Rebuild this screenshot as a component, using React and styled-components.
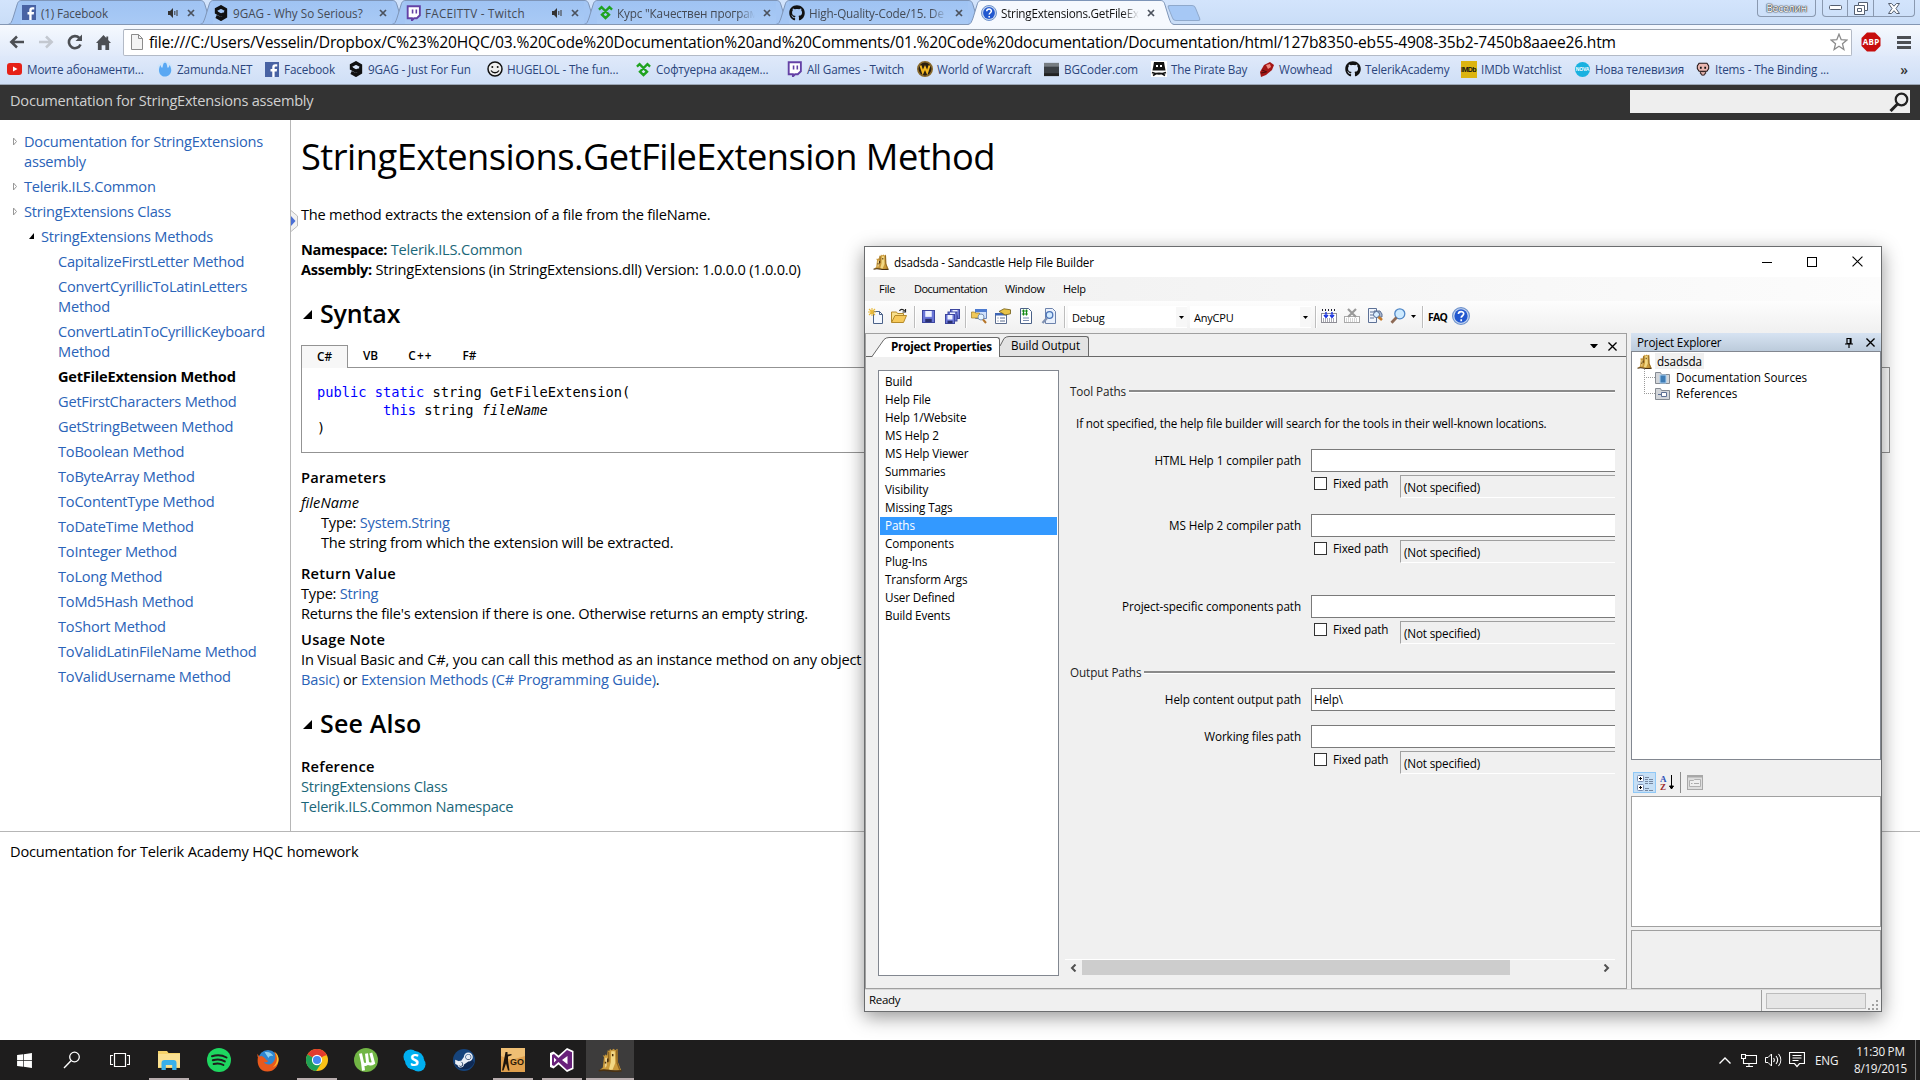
import React from 'react';
import styled, { createGlobalStyle, css } from 'styled-components';
import { FaWindows, FaGithub, FaSteamSymbol } from 'react-icons/fa';

const Global = createGlobalStyle`
  * { box-sizing: border-box; }
  html, body { margin: 0; padding: 0; background: #fff; overflow: hidden; }
  body { font-family: "Open Sans", "Noto Sans", sans-serif; color: #000; }
  svg { display: block; flex: none; }
`;

const Screen = styled.div`
  width: 1920px;
  height: 1080px;
  display: flex;
  flex-direction: column;
  position: relative;
  overflow: hidden;
  background: #fff;
  white-space: nowrap;
`;

/* ---------- drawings ---------- */

const Svg = ({ w = 16, h = w, vb = '0 0 16 16', children, ...rest }) => (
  <svg width={w} height={h} viewBox={vb} fill="none" preserveAspectRatio="none" {...rest}>{children}</svg>
);

const FacebookIcon = () => (
  <Svg w={14} h={15}><rect width="16" height="16" fill="#4862a3" /><path d="M11 16V10h2.400l.4-2.600H11V6c0-.9.4-1.300 1.400-1.300H14V2.300h-2.200C9.300 2.300 8.300 3.600 8.300 5.700V7.400H6.300V10h2v6z" fill="#fff" /></Svg>
);
const NineIcon = () => (
  <Svg w={14} h={16}><path d="M13.200 8.300 8 10.200 2.700 7.500V4.300L8 1.900l5.300 2.600v7L8 14.200l-5.600-2.700" stroke="#111" strokeWidth="3.500" /></Svg>
);
const TwitchIcon = () => (
  <Svg w={15} h={16}><path d="M1.800 1.200h13v9l-3.300 3H8.600L6.300 15.400V13.200H1.800z" fill="#fff" stroke="#6441a5" strokeWidth="2" /><path d="M7 4.500v4M11 4.500v4" stroke="#6441a5" strokeWidth="1.700" /></Svg>
);
const TelerikIcon = () => (
  <Svg w={15}><path d="M1 5 3.800 2.300 8 6.500l4.200-4.200L15 5M8 6.500l-3.800 3.800L8 14l3.800-3.700z" stroke="#1fa31f" strokeWidth="2.500" /></Svg>
);
const HelpIcon = ({ s = 16 }) => (
  <Svg w={s}><circle cx="8" cy="8" r="7.500" fill="#c6d6ef" stroke="#6f93cc" /><circle cx="8" cy="8" r="5.900" fill="#2258cf" /><path d="M5.700 6.300c.1-3 4.700-2.900 4.700-.2C10.400 7.800 8.200 7.700 8.200 9.600M8.200 10.900v1.700" stroke="#fff" strokeWidth="1.500" /></Svg>
);
const YoutubeIcon = () => (
  <Svg w={15} h={12} vb="0 0 15 12"><rect width="15" height="12" rx="3" fill="#e62117" /><path d="M6 3.500 10.500 6 6 8.500z" fill="#fff" /></Svg>
);
const ZamundaIcon = () => (
  <Svg><circle cx="8" cy="8.500" r="7.400" fill="#cfe5fb" /><path d="M8 .5c3 3.500 1.500 5 3 6.500 1-1 1.500-2 1.500-3 4 6 .5 11.500-4.500 11.500S0 10 3.500 4c0 1 .5 2 1.500 3C6.500 5.500 5 4 8 .5z" fill="#5aa8f3" /><path d="M1 6a7.500 7.500 0 0 1 14 0" stroke="#cfe5fb" strokeWidth="1" /></Svg>
);
const SmileIcon = () => (
  <Svg><circle cx="8" cy="8" r="7" fill="#eee" stroke="#111" strokeWidth="1.500" /><circle cx="5.300" cy="6" r="1" fill="#111" /><circle cx="10.700" cy="6" r="1" fill="#111" /><path d="M4 9.500c2 3 6 3 8 0" stroke="#111" strokeWidth="1.300" /></Svg>
);
const WowIcon = () => (
  <Svg><circle cx="8" cy="8" r="7.200" fill="#2b2010" stroke="#8a6a2c" strokeWidth="1.600" /><path d="M3.500 4.500 5.800 11.500 8 6.500l2.200 5L12.500 4.500" stroke="#f5b921" strokeWidth="2" /></Svg>
);
const BgCoderIcon = () => (
  <Svg w={15}><rect y="1" width="16" height="14" fill="#3b3f44" /><path d="M0 1h16v4H0z" fill="#777d82" /><path d="M0 12h16v3H0z" fill="#222" /></Svg>
);
const PirateIcon = () => (
  <Svg><rect width="16" height="16" fill="#fff" /><path d="M3 1h10l1.500 8.500h-13z" fill="#111" /><path d="M5 4h2v2H5zM9 4h2v2H9z" fill="#fff" /><path d="M1 11.500c5 2 9 2 14 0M2 14.500c4-3 8-3 12 0" stroke="#111" strokeWidth="1.600" /></Svg>
);
const WowheadIcon = () => (
  <Svg><path d="M1 11 5 4l6-3 4 3-2 5-6 5-5 2z" fill="#a31515" /><path d="M7 4l4-1 1 3-3 2z" fill="#f08a80" /><path d="M2 12l5-1M3 9l5 2" stroke="#4b0b0b" /></Svg>
);
const IsaacIcon = () => (
  <Svg w={14}><path d="M3.500 1.500h9l2 3v3l-2 3h-9l-2-3v-3z" fill="#e9b6b0" stroke="#241515" strokeWidth="1.200" /><path d="M4.500 5.500h2v2.300h-2zM9.500 5.500h2v2.300h-2z" fill="#111" /><path d="M5 11h6v2.500H9.500V15h-3v-1.500H5z" fill="#e9b6b0" stroke="#241515" /></Svg>
);
const CastleIcon = ({ s = 16 }) => (
  <Svg w={s}>
    <path d="M6.500 1.500 7.500 2l.5-1.500 1 1 1.500-1 1 1L13 .5l.3 9L15.500 15H.8l2.400-2L4 6.200l-.8-1.400 1.300.3.7-1 .8 1z" fill="#c9993a" />
    <path d="M8.800 2.200h2.400l.3 7.800-1.800 4.500H7.200l1.300-5z" fill="#f2d884" />
    <path d="M4.800 6.500h1.400L5.800 12l-1.300 1.500z" fill="#ecd08a" />
    <path d="M12.500 1.500l.3 8.500 1.700 4.500M7 2.500 7.200 9" stroke="#8a6220" strokeWidth=".9" />
    <path d="M.5 15.200c3-1 4.500-.6 7.500 0s5 .2 7.700 0" stroke="#4a3213" strokeWidth="1.100" />
    <path d="M6.500 7v2.500M9.800 4v1.500M5 9.200v1.200" stroke="#4a2f0c" />
  </Svg>
);

/* ---------- browser chrome ---------- */

const TabStrip = styled.div`
  height: 25px;
  flex: none;
  display: flex;
  padding-left: 8px;
  background: linear-gradient(#d3e4fc, #c9ddf7);
  box-shadow: inset 0 -1px 0 #8497b3;
`;
const TabBox = styled.div`
  display: flex;
  width: 206px;
  margin-right: -14px;
  height: 25px;
  flex: none;
  position: relative;
  z-index: ${(p) => (p.$active ? 2 : 1)};
`;
const TabMiddle = styled.div`
  flex: 1;
  height: 25px;
  display: flex;
  align-items: center;
  margin: 0 -1px;
  padding-bottom: 1px;
  border-top: 1px solid #7e95b8;
  background: ${(p) => (p.$active ? '#f6f9fe' : 'linear-gradient(#9fc3f3, #a9caf5)')};
  ${(p) => !p.$active && css`box-shadow: inset 0 -1px 0 #8497b3;`}
`;
const TabTitle = styled.span`
  width: ${(p) => p.$w}px;
  margin-left: 4px;
  font-size: 11.700px;
  letter-spacing: ${(p) => p.$ls ?? -0.140}px;
  color: ${(p) => (p.$active ? '#111' : '#444a55')};
  ${(p) => p.$fade && css`
    -webkit-mask-image: linear-gradient(90deg, #000 88%, transparent 100%);
  `}
`;
const TabIcon = styled.span`
  width: 16px;
  display: flex;
  justify-content: center;
`;
const TabEnd = styled.span`
  flex: 1;
  display: flex;
  align-items: center;
  justify-content: flex-end;
  gap: 9px;
  margin-right: 6px;
`;
const NewTab = styled.span`
  width: 28px;
  height: 16px;
  margin: 5px 0 0 10px;
  border: 1px solid #8fa9cc;
  border-radius: 3px;
  background: #a6c8f5;
  transform: skewX(22deg);
`;
const SlantSvg = styled.svg`
  transform: ${(p) => (p.$flip ? 'scaleX(-1)' : 'none')};
`;
const Slant = ({ active, right }) => (
  <SlantSvg $flip={right} width="14" height="25" viewBox="0 0 14 25">
    <path d="M0 24.500C3 24 3.500 22 5 18L9 5C10 1.500 11 .5 14 .5V25H0z" fill={active ? '#f6f9fe' : '#a4c6f4'} />
    <path d="M0 24.500C3 24 3.500 22 5 18L9 5C10 1.500 11 .5 14 .5" fill="none" stroke="#7e95b8" />
    {!active && <path d="M0 24.500H14" stroke="#8497b3" />}
  </SlantSvg>
);
const Speaker = () => (
  <Svg w={10} h={10} vb="0 0 10 10"><path d="M0 3h2l3-3v10L2 7H0z" fill="#333" /><path d="M6.800 3v4M9 2v6" stroke="#444" strokeWidth="1.100" /></Svg>
);
const TabClose = () => (
  <Svg w={8} h={8} vb="0 0 8 8"><path d="M1 1l6 6M7 1 1 7" stroke="#4b525d" strokeWidth="1.700" /></Svg>
);

function Tab({ icon, title, w, ls, sound, fade, active }) {
  return (
    <TabBox $active={active}>
      <Slant active={active} />
      <TabMiddle $active={active}>
        <TabIcon>{icon}</TabIcon>
        <TabTitle $w={w} $ls={ls} $fade={fade} $active={active}>{title}</TabTitle>
        <TabEnd>{sound && <Speaker />}<TabClose /></TabEnd>
      </TabMiddle>
      <Slant active={active} right />
    </TabBox>
  );
}

const CaptionGroup = styled.div`
  display: flex;
  margin-left: auto;
  margin-right: 5px;
  gap: 14px;
`;
const UserButton = styled.div`
  width: 59px;
  height: 17px;
  border: 1px solid #8a99b0;
  border-top: 0;
  border-radius: 0 0 4px 4px;
  text-align: center;
  font-size: 10.300px;
  line-height: 17px;
  letter-spacing: -0.200px;
  color: #fff;
  text-shadow: 0 0 1px #222, 0 0 1px #222, 0 0 2px #444;
`;
const CaptionButtons = styled.div`
  display: flex;
  width: 93px;
  height: 17px;
  margin-left: -8px;
  border: 1px solid #8a99b0;
  border-top: 0;
  border-radius: 0 0 4px 4px;
`;
const CaptionButton = styled.div`
  width: ${(p) => p.$w}px;
  display: flex;
  align-items: center;
  justify-content: center;
  & + & { border-left: 1px solid #8a99b0; }
`;

const Toolbar = styled.div`
  height: 31px;
  flex: none;
  display: flex;
  align-items: center;
  padding: 3px 9px 0 9px;
  background: linear-gradient(#f6f9fe, #e0eafa);
`;
const NavIcons = styled.div`
  display: flex;
  align-items: center;
  width: 114px;
  gap: 13px;
`;
const Omnibox = styled.div`
  width: 1730px;
  height: 27px;
  display: flex;
  align-items: center;
  padding: 0 3px 0 7px;
  border: 1px solid #b3bac6;
  border-top-color: #9aa2ae;
  border-radius: 2px;
  background: #fff;
`;
const Url = styled.span`
  flex: 1;
  margin-left: 6px;
  font-size: 15.600px;
  letter-spacing: -0.186px;
`;
const ToolbarEnd = styled.div`
  display: flex;
  align-items: center;
  margin-left: 9px;
  gap: 16px;
`;
const AbpText = styled.text`
  font: 700 8px "Open Sans", sans-serif;
  fill: #fff;
`;

const BookmarkBar = styled.div`
  height: 29px;
  flex: none;
  display: flex;
  align-items: center;
  padding: 0 0 2px 6px;
  background: linear-gradient(#dfe9fa, #cfdff6);
  border-bottom: 1px solid #9ba6b5;
`;
const Bookmark = styled.div`
  width: ${(p) => p.$w}px;
  display: flex;
  align-items: center;
  gap: 4px;
  flex: none;
  font-size: 11.700px;
  letter-spacing: -0.130px;
  color: #2b457c;
`;
const BookmarkIcon = styled.span`
  width: 17px;
  display: flex;
  justify-content: center;
`;
const ImdbBadge = styled.span`
  width: 16px;
  height: 17px;
  background: #dcb410;
  font: 700 7px/17px "Liberation Sans", sans-serif;
  letter-spacing: -0.500px;
  color: #111;
  text-align: center;
`;
const NovaBadge = styled.span`
  width: 15px;
  height: 15px;
  border-radius: 50%;
  background: #19b1e0;
  font: 700 5px/15px "Liberation Sans", sans-serif;
  color: #fff;
  text-align: center;
`;
const More = styled.span`
  margin-left: auto;
  margin-right: 12px;
  font-size: 14px;
  font-weight: 600;
  color: #333;
`;

const BOOKMARKS = [
  [150, <YoutubeIcon />, 'Моите абонаменти...'],
  [107, <ZamundaIcon />, 'Zamunda.NET'],
  [84, <FacebookIcon />, 'Facebook'],
  [139, <NineIcon />, '9GAG - Just For Fun'],
  [149, <SmileIcon />, 'HUGELOL - The fun...'],
  [151, <TelerikIcon />, 'Софтуерна академ...'],
  [130, <TwitchIcon />, 'All Games - Twitch'],
  [127, <WowIcon />, 'World of Warcraft'],
  [107, <BgCoderIcon />, 'BGCoder.com'],
  [108, <PirateIcon />, 'The Pirate Bay'],
  [86, <WowheadIcon />, 'Wowhead'],
  [116, <FaGithub size={16} color="#111" />, 'TelerikAcademy'],
  [114, <ImdbBadge>IMDb</ImdbBadge>, 'IMDb Watchlist'],
  [120, <NovaBadge>NOVA</NovaBadge>, 'Нова телевизия'],
  [150, <IsaacIcon />, 'Items - The Binding ...'],
];

function Browser() {
  return (
    <>
      <TabStrip>
        <Tab icon={<FacebookIcon />} title="(1) Facebook" w={90} sound />
        <Tab icon={<NineIcon />} title="9GAG - Why So Serious?" w={136} ls={0} />
        <Tab icon={<TwitchIcon />} title="FACEITTV - Twitch" w={108} ls={0.250} sound />
        <Tab icon={<TelerikIcon />} title={'Курс "Качествен програм'} w={138} fade />
        <Tab icon={<FaGithub size={16} color="#111" />} title="High-Quality-Code/15. De" w={138} fade />
        <Tab icon={<HelpIcon />} title="StringExtensions.GetFileEx" w={138} ls={-0.240} fade active />
        <NewTab />
        <CaptionGroup>
          <UserButton>Веселин</UserButton>
          <CaptionButtons>
            <CaptionButton $w={25}><Svg w={13} h={6} vb="0 0 13 6"><rect x=".5" y=".5" width="12" height="4" rx="1" fill="#fff" stroke="#555f70" /></Svg></CaptionButton>
            <CaptionButton $w={26}><Svg w={14} h={13} vb="0 0 14 13"><path d="M4.500.500h9v8h-3v4h-10v-9h4z" fill="#fff" stroke="#555f70" /><path d="M4.500 3.500h6v5M3.500 6.500h4v3h-4z" stroke="#555f70" /></Svg></CaptionButton>
            <CaptionButton $w={42}><Svg w={12} h={11} vb="0 0 12 11"><path d="M.500.500h3L6 3.200 8.500.500h3L8 5.500l3.500 5h-3L6 7.700 3.500 10.500h-3l3.500-5z" fill="#fff" stroke="#555f70" /></Svg></CaptionButton>
          </CaptionButtons>
        </CaptionGroup>
      </TabStrip>
      <Toolbar>
        <NavIcons>
          <Svg><path d="M15 8H2.500M8 2.500 2.300 8 8 13.500" stroke="#4c4f54" strokeWidth="2.500" /></Svg>
          <Svg><path d="M1 8h12.500M8 2.500 13.700 8 8 13.500" stroke="#c3c8d0" strokeWidth="2.500" /></Svg>
          <Svg><path d="M13.500 10.500A6 6 0 1 1 12.300 4" stroke="#4c4f54" strokeWidth="2.600" /><path d="M15 .5V7H8.500z" fill="#4c4f54" /></Svg>
          <Svg w={15}><path d="M8 0 0 8.500h2V16h4v-5h4v5h4V8.500h2L13 5.300V1.500h-2v1.700z" fill="#4c4f54" /></Svg>
        </NavIcons>
        <Omnibox>
          <Svg w={12} h={16} vb="0 0 12 16"><path d="M.500.500h7l4 4v11H.500z" fill="#f4f4f4" stroke="#8c8c8c" /><path d="M7.500.500v4h4" stroke="#8c8c8c" /></Svg>
          <Url>file:///C:/Users/Vesselin/Dropbox/C%23%20HQC/03.%20Code%20Documentation%20and%20Comments/01.%20Code%20documentation/Documentation/html/127b8350-eb55-4908-35b2-7450b8aaee26.htm</Url>
          <Svg w={18} h={18} vb="0 0 18 18"><path d="M9 1.200l2.200 5.500 5.700.400-4.400 3.700 1.400 5.700L9 13.300l-4.900 3.200 1.400-5.700L1.100 7.100l5.700-.400z" fill="#fff" stroke="#8b8b8b" strokeWidth="1.300" /></Svg>
        </Omnibox>
        <ToolbarEnd>
          <Svg w={20} h={20} vb="0 0 20 20"><path d="M6 .5h8L19.500 6v8L14 19.500H6L.5 14V6z" fill="#c70d0d" /><AbpText x="1.800" y="13" textLength="16.500">ABP</AbpText></Svg>
          <Svg w={14} h={13} vb="0 0 14 13"><path d="M0 1.500h14M0 6.500h14M0 11.500h14" stroke="#4c4f54" strokeWidth="3" /></Svg>
        </ToolbarEnd>
      </Toolbar>
      <BookmarkBar>
        {BOOKMARKS.map(([w, icon, label]) => (
          <Bookmark key={label} $w={w}><BookmarkIcon>{icon}</BookmarkIcon>{label}</Bookmark>
        ))}
        <More>»</More>
      </BookmarkBar>
    </>
  );
}

/* ---------- documentation page ---------- */

const DocHeader = styled.header`
  height: 35px;
  flex: none;
  display: flex;
  align-items: flex-start;
  justify-content: space-between;
  padding: 5px 10px 0;
  background: #333;
  color: #d0d0d0;
  font-size: 14.600px;
  line-height: 21px;
  letter-spacing: -0.240px;
`;
const SearchBox = styled.div`
  width: 280px;
  height: 23px;
  display: flex;
  align-items: center;
  justify-content: flex-end;
  padding-right: 1px;
  background: #eee;
`;
const DocBody = styled.div`
  height: 712px;
  flex: none;
  display: flex;
  border-bottom: 1px solid #b6b6b6;
  font-size: 14.600px;
  line-height: 20px;
  letter-spacing: -0.215px;
`;
const Toc = styled.nav`
  width: 291px;
  padding-top: 11px;
  border-right: 1px solid #b6b6b6;
  display: flex;
  flex-direction: column;
  gap: 5px;
`;
const TocItem = styled.div`
  display: flex;
  padding-left: ${(p) => 10 + p.$level * 17}px;
  color: ${(p) => (p.$current ? '#000' : '#2a63b8')};
  font-weight: ${(p) => (p.$current ? 700 : 400)};
  letter-spacing: ${(p) => (p.$current ? -0.230 : -0.215)}px;
`;
const TocMark = styled.span`
  width: 14px;
  padding-top: 6px;
`;
const TocLabel = styled.span`
  white-space: pre-line;
`;
const SplitHandle = styled.div`
  width: 7px;
  height: 22px;
  margin: 90px -7px 0 0;
  flex: none;
`;
const Content = styled.main`
  flex: 1;
  padding: 11px 30px 0 10px;
`;
const Title = styled.h1`
  margin: 0 0 23px;
  font-size: 36.300px;
  line-height: 50px;
  font-weight: 400;
  letter-spacing: -0.530px;
`;
const Line = styled.div`
  margin-top: ${(p) => p.$mt || 0}px;
  padding-left: ${(p) => p.$indent || 0}px;
  letter-spacing: ${(p) => p.$ls ?? -0.215}px;
  ${(p) => p.$italic && css`font-style: italic;`}
`;
const Strong = styled.b`
  font-weight: 700;
  letter-spacing: -0.310px;
`;
const Link = styled.span`
  color: ${(p) => (p.$teal ? '#1a6678' : '#2a63b8')};
`;
const Section = styled.h2`
  display: flex;
  align-items: center;
  gap: 8px;
  margin: ${(p) => p.$mt}px 0 0;
  padding-left: 2px;
  font-size: 25px;
  line-height: 34px;
  font-weight: 600;
  letter-spacing: ${(p) => p.$ls || 0}px;
`;
const SectionMark = styled.span`
  padding-top: 2px;
`;
const SubHead = styled.h4`
  margin: ${(p) => p.$mt}px 0 0;
  font-size: 14.700px;
  line-height: 20px;
  font-weight: 600;
  letter-spacing: 0.240px;
`;
const LangTabs = styled.div`
  display: flex;
  height: 23px;
  margin: 15px 0 -1px;
  position: relative;
`;
const LangTab = styled.span`
  width: ${(p) => p.$w}px;
  font-size: 11.800px;
  line-height: 21px;
  font-weight: 600;
  letter-spacing: ${(p) => p.$ls || 0}px;
  text-align: center;
  ${(p) => p.$active && css`
    border: 1px solid #939393;
    border-bottom: 0;
    background: #f7f7f7;
  `}
`;
const Code = styled.pre`
  height: 86px;
  margin: 0;
  padding: 15px 15px 0;
  border: 1px solid #939393;
  font: 13.690px/18px "DejaVu Sans Mono", monospace;
  letter-spacing: 0;
`;
const Kw = styled.span`
  color: #0000ff;
`;
const DocFooter = styled.footer`
  padding: 9px 10px;
  font-size: 14.600px;
  line-height: 20px;
  letter-spacing: -0.180px;
`;

const TOC = [
  [0, 'Documentation for StringExtensions\nassembly', 'closed'],
  [0, 'Telerik.ILS.Common', 'closed'],
  [0, 'StringExtensions Class', 'closed'],
  [1, 'StringExtensions Methods', 'open'],
  [2, 'CapitalizeFirstLetter Method'],
  [2, 'ConvertCyrillicToLatinLetters\nMethod'],
  [2, 'ConvertLatinToCyrillicKeyboard\nMethod'],
  [2, 'GetFileExtension Method'],
  [2, 'GetFirstCharacters Method'],
  [2, 'GetStringBetween Method'],
  [2, 'ToBoolean Method'],
  [2, 'ToByteArray Method'],
  [2, 'ToContentType Method'],
  [2, 'ToDateTime Method'],
  [2, 'ToInteger Method'],
  [2, 'ToLong Method'],
  [2, 'ToMd5Hash Method'],
  [2, 'ToShort Method'],
  [2, 'ToValidLatinFileName Method'],
  [2, 'ToValidUsername Method'],
];

const ClosedMark = () => (
  <Svg w={8} h={9} vb="0 0 8 9"><path d="M3.500 1v7L6.500 4.500z" stroke="#999" /></Svg>
);
const OpenMark = () => (
  <Svg w={14} h={7} vb="0 0 14 7"><path d="M7 1v6H2z" fill="#000" /></Svg>
);
const SectionTriangle = () => (
  <SectionMark><Svg w={9} h={9} vb="0 0 7 7"><path d="M7 0v7H0z" fill="#000" /></Svg></SectionMark>
);

function DocPage() {
  return (
    <>
      <DocHeader>
        Documentation for StringExtensions assembly
        <SearchBox>
          <Svg w={20} h={20} vb="0 0 20 20"><circle cx="12.500" cy="7.500" r="5.800" stroke="#222" strokeWidth="2.200" /><path d="M8.500 12 1.500 19" stroke="#222" strokeWidth="3" /></Svg>
        </SearchBox>
      </DocHeader>
      <DocBody>
        <Toc>
          {TOC.map(([level, label, mark]) => (
            <TocItem key={label} $level={level} $current={label === 'GetFileExtension Method'}>
              <TocMark>{mark === 'closed' && <ClosedMark />}{mark === 'open' && <OpenMark />}</TocMark>
              <TocLabel>{label}</TocLabel>
            </TocItem>
          ))}
        </Toc>
        <SplitHandle>
          <Svg w={7} h={22} vb="0 0 7 22"><path d="M0 .5 6.500 6v10L0 21.500" fill="#f2f2f2" stroke="#bbb" /><path d="M0 6l4.500 5L0 16z" fill="#4a6fd6" /></Svg>
        </SplitHandle>
        <Content>
          <Title>StringExtensions.GetFileExtension Method</Title>
          <Line>The method extracts the extension of a file from the fileName.</Line>
          <Line $mt={15}><Strong>Namespace:</Strong> <Link $teal>Telerik.ILS.Common</Link></Line>
          <Line><Strong>Assembly:</Strong> StringExtensions (in StringExtensions.dll) Version: 1.0.0.0 (1.0.0.0)</Line>
          <Section $mt={17} $ls={-0.150}><SectionTriangle />Syntax</Section>
          <LangTabs>
            <LangTab $w={47} $active>C#</LangTab>
            <LangTab $w={45}>VB</LangTab>
            <LangTab $w={55} $ls={1.200}>C++</LangTab>
            <LangTab $w={43}>F#</LangTab>
          </LangTabs>
          <Code><Kw>public</Kw> <Kw>static</Kw> string GetFileExtension({'\n'}{'        '}<Kw>this</Kw> string <i>fileName</i>{'\n'})</Code>
          <SubHead $mt={14}>Parameters</SubHead>
          <Line $mt={5} $ls={0.060} $italic>fileName</Line>
          <Line $indent={20}>Type: <Link>System.String</Link></Line>
          <Line $indent={20}>The string from which the extension will be extracted.</Line>
          <SubHead $mt={11}>Return Value</SubHead>
          <Line>Type: <Link>String</Link></Line>
          <Line $ls={-0.245}>Returns the file's extension if there is one. Otherwise returns an empty string.</Line>
          <SubHead $mt={6}>Usage Note</SubHead>
          <Line $ls={-0.160}>In Visual Basic and C#, you can call this method as an instance method on any object</Line>
          <Line $ls={-0.190}><Link>Basic)</Link> or <Link>Extension Methods (C# Programming Guide)</Link>.</Line>
          <Section $mt={17} $ls={0.200}><SectionTriangle />See Also</Section>
          <SubHead $mt={16}>Reference</SubHead>
          <Line $ls={-0.250}><Link $teal>StringExtensions Class</Link></Line>
          <Line $ls={-0.250}><Link $teal>Telerik.ILS.Common Namespace</Link></Line>
        </Content>
      </DocBody>
      <DocFooter>Documentation for Telerik Academy HQC homework</DocFooter>
    </>
  );
}

/* ---------- help file builder window ---------- */

const Win = styled.div`
  position: absolute;
  left: 864px;
  top: 246px;
  width: 1018px;
  height: 766px;
  display: flex;
  flex-direction: column;
  border: 1px solid #6b6d6f;
  background: #f0f0f0;
  box-shadow: 0 5px 18px rgba(0, 0, 0, 0.42);
  font-size: 11.700px;
  letter-spacing: -0.160px;
`;
const WinTitle = styled.div`
  height: 30px;
  flex: none;
  display: flex;
  align-items: center;
  padding: 0 0 1px 8px;
  gap: 5px;
  background: #fff;
`;
const WinButtons = styled.div`
  display: flex;
  align-items: center;
  margin-left: auto;
  margin-right: 18px;
  gap: 35px;
`;
const MenuBar = styled.div`
  height: 24px;
  flex: none;
  display: flex;
  align-items: center;
  padding: 0 0 2px 14px;
  background: linear-gradient(90deg, #f0f0f0, #fcfcfc);
  font-size: 11px;
`;
const MenuItem = styled.span`
  width: ${(p) => p.$w}px;
  letter-spacing: ${(p) => p.$ls ?? -0.300}px;
`;
const IconBar = styled.div`
  height: 32px;
  flex: none;
  display: flex;
  align-items: center;
  background: linear-gradient(#fdfdfd, #f0f0f0);
`;
const Tool = styled.span`
  width: 16px;
  margin-left: ${(p) => p.$ml}px;
  margin-bottom: 2px;
`;
const Sep = styled.span`
  width: 2px;
  height: 22px;
  margin-left: ${(p) => p.$ml}px;
  background: #bdbdbd;
  border-right: 1px solid #fff;
`;
const Combo = styled.span`
  width: ${(p) => p.$w}px;
  height: 22px;
  margin-left: ${(p) => p.$ml}px;
  padding-left: 4px;
  display: flex;
  align-items: center;
  justify-content: space-between;
  background: #fff;
  font-size: 11px;
  letter-spacing: -0.200px;
`;
const ComboArrow = styled.span`
  width: 11px;
  height: 20px;
  display: flex;
  align-items: center;
  justify-content: center;
  background: #f7f7f7;
`;
const Faq = styled.b`
  width: 20px;
  margin-left: 4px;
  font: 700 10.500px "Open Sans", sans-serif;
  letter-spacing: -0.800px;
`;
const WinBody = styled.div`
  height: 656px;
  flex: none;
  display: flex;
  gap: 4px;
`;
const Dock = styled.div`
  width: 762px;
  display: flex;
  flex-direction: column;
  border: 1px solid #a0a0a0;
`;
const DockTabs = styled.div`
  height: 23px;
  flex: none;
  display: flex;
  align-items: flex-end;
  padding-left: 6px;
  border-bottom: 1px solid #696969;
`;
const DockTab = styled.div`
  display: flex;
  height: 20px;
  margin-bottom: ${(p) => (p.$active ? -1 : 0)}px;
`;
const DockTabLabel = styled.span`
  width: ${(p) => p.$w}px;
  padding-left: 2px;
  border: solid #696969;
  border-width: 1px 1px 0 0;
  border-top-right-radius: 3px;
  background: ${(p) => (p.$active ? '#fff' : '#e3e3e3')};
  line-height: 16px;
  font-weight: ${(p) => (p.$active ? 700 : 400)};
  letter-spacing: ${(p) => (p.$active ? -0.250 : -0.060)}px;
`;
const DockButtons = styled.div`
  display: flex;
  align-items: center;
  gap: 10px;
  margin-left: auto;
  margin-right: 9px;
  height: 20px;
`;
const DockContent = styled.div`
  flex: 1;
  display: flex;
  padding: 13px 11px 12px 12px;
  gap: 9px;
`;
const PageList = styled.div`
  width: 181px;
  padding: 2px 1px;
  border: 1px solid #828790;
  background: #fff;
`;
const PageRow = styled.div`
  height: 18px;
  padding-left: 5px;
  line-height: 16px;
  letter-spacing: -0.120px;
  color: ${(p) => (p.$selected ? '#fff' : '#000')};
  background: ${(p) => (p.$selected ? '#3399ff' : 'transparent')};
  background-clip: border-box;
  margin-bottom: 0;
`;
const Form = styled.div`
  width: 547px;
  display: flex;
  flex-direction: column;
`;
const GroupTitle = styled.div`
  display: flex;
  align-items: center;
  gap: 3px;
  height: 18px;
  margin: ${(p) => p.$mt}px 2px 0 2px;
  line-height: 17px;
  letter-spacing: -0.080px;
  color: #222;
  &::after {
    content: '';
    flex: 1;
    height: 2px;
    background: #8a8a8a;
    border-bottom: 1px solid #fff;
    margin-right: -2px;
  }
`;
const Hint = styled.div`
  margin: 14px 0 17px 8px;
  line-height: 18px;
  letter-spacing: -0.135px;
`;
const PathRow = styled.div`
  display: flex;
  align-items: center;
  height: 23px;
  margin-top: ${(p) => p.$mt || 0}px;
`;
const PathLabel = styled.span`
  width: 233px;
  margin-right: 10px;
  padding-bottom: 2px;
  text-align: right;
  letter-spacing: -0.080px;
`;
const PathInput = styled.span`
  flex: 1;
  height: 23px;
  padding-left: 2px;
  border: 1px solid #7a7a7a;
  border-right: 0;
  background: #fff;
  line-height: 20px;
`;
const FixedRow = styled.div`
  display: flex;
  height: 23px;
  margin: 3px 0 0 246px;
`;
const CheckBox = styled.span`
  width: 13px;
  height: 13px;
  margin: 2px 6px 0 0;
  border: 1px solid #333;
  background: #fff;
`;
const FixedLabel = styled.span`
  width: 67px;
  line-height: 17px;
`;
const NotSpecified = styled.span`
  flex: 1;
  height: 23px;
  padding-left: 3px;
  border: solid #a0a0a0;
  border-width: 1px 0 0 1px;
  border-bottom: 1px solid #fff;
  line-height: 22px;
`;
const ScrollBar = styled.div`
  display: flex;
  align-items: center;
  height: 17px;
  margin-top: auto;
  margin-left: -3px;
  border-top: 1px solid #fff;
  padding: 0 5px 1px;
`;
const Thumb = styled.span`
  width: 428px;
  height: 15px;
  margin-left: 5px;
  margin-right: auto;
  background: #cdcdcd;
`;
const Side = styled.div`
  width: 250px;
  display: flex;
  flex-direction: column;
`;
const SideHeader = styled.div`
  height: 18px;
  flex: none;
  display: flex;
  align-items: center;
  padding: 0 6px 0;
  background: linear-gradient(#d7e3f2, #bccbdb);
`;
const SideButtons = styled.span`
  display: flex;
  align-items: center;
  gap: 13px;
  margin-left: auto;
  padding-top: 1px;
`;
const Tree = styled.div`
  height: 409px;
  flex: none;
  padding: 1px 0 0 5px;
  border: 1px solid #828790;
  background: #fff;
`;
const TreeRow = styled.div`
  display: flex;
  align-items: center;
  height: 16px;
  padding-left: ${(p) => (p.$child ? 7 : 0)}px;
  gap: ${(p) => (p.$child ? 5 : 4)}px;
`;
const TreeLabel = styled.span`
  margin-left: -1px;
  padding: 0 2px;
  line-height: 16px;
  letter-spacing: ${(p) => p.$ls || -0.080}px;
  background: ${(p) => (p.$root ? '#f0f0f0' : 'transparent')};
`;
const Branch = styled.span`
  width: 11px;
  height: 16px;
  margin-right: -5px;
`;
const PropBar = styled.div`
  height: 36px;
  flex: none;
  display: flex;
  align-items: center;
  padding: 9px 0 0 2px;
`;
const Category = styled.span`
  width: 23px;
  height: 21px;
  display: flex;
  align-items: center;
  justify-content: center;
  border: 1px solid #90c8f6;
  background: #c6dff5;
`;
const SortIcon = styled.span`
  display: flex;
  margin-left: 4px;
  gap: 3px;
  align-items: center;
`;
const SortLetters = styled.span`
  display: flex;
  flex-direction: column;
  font: 700 9px/8px "Liberation Serif", serif;
  color: #2c51b8;
  & > em { font-style: normal; color: #9c2a2a; }
`;
const PropSep = styled.span`
  width: 1px;
  height: 21px;
  margin: 0 6px 0 6px;
  background: #8c8c8c;
`;
const PropGrid = styled.div`
  height: 131px;
  flex: none;
  border: 1px solid #a0a0a0;
  background: #fff;
`;
const PropHelp = styled.div`
  flex: 1;
  margin-top: 3px;
  border: 1px solid #a0a0a0;
`;
const StatusBar = styled.div`
  flex: 1;
  display: flex;
  padding-left: 4px;
  border-top: 1px solid #d9d9d9;
  line-height: 20px;
  font-size: 11.500px;
  letter-spacing: -0.300px;
`;
const StatusEnd = styled.div`
  display: flex;
  width: 120px;
  margin-left: auto;
  padding: 3px 0 0 4px;
  border-left: 1px solid #a0a0a0;
`;
const Progress = styled.span`
  width: 100px;
  height: 16px;
  border: 1px solid #bcbcbc;
  background: #e6e6e6;
`;

const NewDoc = () => (<Svg><path d="M5.500 3.500h6l3 3v9h-9z" fill="#f4f8ff" stroke="#4a6188" /><path d="M11.500 3.500v3h3" stroke="#4a6188" /><path d="M4 0v8M0 4h8M1 1l6 6M7 1 1 7" stroke="#e8b93a" strokeWidth="1.100" /></Svg>);
const OpenFolder = () => (<Svg><path d="M.500 14V4h5l1 1.500h6V8" fill="#f8e08c" stroke="#b58a2a" /><path d="M.500 14.500 4 7.500h11.500L12.500 14.500z" fill="#f6c95a" stroke="#b58a2a" /><path d="M8.500 3C9.500 .8 12 .8 13.500 3M14.500 1v3h-3" stroke="#222" strokeWidth="1.200" /></Svg>);
const Floppy = ({ x = 1, y = 2, w = 13 }) => (<g><rect x={x + 0.5} y={y + 0.5} width={w - 1} height={w - 1} fill="#6a76d8" stroke="#3d469e" /><rect x={x + w * 0.25} y={y + 1} width={w * 0.5} height={w * 0.45} fill="#eef2ff" /><rect x={x + w * 0.25} y={y + w * 0.68} width={w * 0.5} height={w * 0.25} fill="#2a3170" /></g>);
const SaveOne = () => <Svg><Floppy /></Svg>;
const SaveAll = () => <Svg><Floppy x={6} y={1} w={10} /><Floppy x={3.500} y={3.500} w={10} /><Floppy x={1} y={6} w={10} /></Svg>;
const ExplorerTool = () => (<Svg><path d="M4.500 1.500h11v9h-11z" fill="#cfe0fb" stroke="#6b88bb" /><path d="M4 1h12v3H4z" fill="#4d7bd0" /><path d="M.5 4h3l1 1h4v5h-8z" fill="#f0c95a" stroke="#9c7a22" strokeWidth=".7" /><circle cx="10" cy="9" r="3" fill="#e5f4ff" stroke="#7c94b5" /><path d="M12 11.500l3 3.500" stroke="#b5752a" strokeWidth="2" /></Svg>);
const PropsTool = () => (<Svg><path d="M.500 5.500h11v10H.500z" fill="#fff" stroke="#5b6d8f" /><path d="M0 5h12v2.500H0z" fill="#3f66b4" /><path d="M2.500 10h1M5 10h5M2.500 13h1M5 13h5" stroke="#5b6d8f" /><path d="M4 3.500 9 .8l6.500 1v4L10 7 7 5z" fill="#e8c348" stroke="#6f5a15" strokeWidth=".8" /></Svg>);
const ScriptTool = () => (<Svg><path d="M2.500.500h8l3 3v12h-11z" fill="#fff" stroke="#4a6188" /><path d="M5.500 1.500v6M8.500 1.500v6M3.800 3h6M3.800 6h6" stroke="#148a14" strokeWidth="1.200" /><path d="M5 10h6M5 12.500h6" stroke="#7b8db0" /></Svg>);
const PreviewTool = () => (<Svg><path d="M4.500.500h7l3 3v12h-10z" fill="#eaf1fc" stroke="#6d83ac" /><circle cx="8.500" cy="7" r="3.300" fill="#d3ebff" stroke="#4d74b8" strokeWidth="1.300" /><path d="M6 10 1.500 15" stroke="#8192b3" strokeWidth="2.400" /></Svg>);
const BuildTool = ({ off }) => (<Svg><rect x=".5" y={off ? 8.5 : 5.5} width="15" height={off ? 6 : 9} fill="#fff" stroke={off ? '#aaa' : '#223'} strokeDasharray={off ? undefined : '1 1'} /><path d="M2 11h12M2 13h12" stroke={off ? '#aaa' : '#556'} strokeDasharray="1 1" />{off ? <path d="M4 1l8 8M12 1 4 9" stroke="#999" strokeWidth="2.200" /> : <><path d="M1 2h14" stroke="#223" strokeWidth="2" strokeDasharray="1 2" /><path d="M5 4v5M11 4v5M3 7l2 2.500L7 7M9 7l2 2.500L13 7" stroke="#1a34e0" strokeWidth="1.400" /></>}</Svg>);
const ViewTool = () => (<Svg><path d="M1.500.500h8v14h-8z" fill="#f2f6fd" stroke="#5d7196" /><path d="M3 4h4M3 7h4M3 10h4" stroke="#5d7196" /><path d="M7 3h6l2 3v3H9z" fill="#a9b6cc" stroke="#5d7196" /><circle cx="9.500" cy="6.500" r="3" fill="#d9edff" stroke="#51678e" /><path d="M11.500 9l3.500 3" stroke="#c47a2a" strokeWidth="2.600" /></Svg>);
const FindTool = () => (<Svg><circle cx="9.800" cy="5.800" r="5" fill="#cdeaff" stroke="#4f86c6" strokeWidth="1.300" /><path d="M6.500 9.500 1.500 14.800" stroke="#8e6a55" strokeWidth="2.800" /></Svg>);
const Down = ({ s = 5 }) => <Svg w={s} h={s * 0.6} vb="0 0 10 6"><path d="M0 0h10L5 6z" fill="#000" /></Svg>;
const Cross = ({ s = 9, sw = 1.5 }) => <Svg w={s} h={s} vb="0 0 10 10"><path d="M.5.5l9 9M9.500.500l-9 9" stroke="#000" strokeWidth={sw} /></Svg>;
const FolderDoc = ({ refs }) => (<Svg w={15} h={13} vb="0 0 15 13"><path d="M.500 12.500v-11h5l1 2h8v9z" fill="#d3d6da" stroke="#858b93" />{refs ? <path d="M3 7.500h3M6.500 5.500h5v4h-5z" fill="#fff" stroke="#5c6f93" /> : <path d="M5 4h6v8H5z" fill="#3e7cb5" stroke="#a5cdf0" />}</Svg>);

const PAGES = ['Build', 'Help File', 'Help 1/Website', 'MS Help 2', 'MS Help Viewer', 'Summaries', 'Visibility', 'Missing Tags', 'Paths', 'Components', 'Plug-Ins', 'Transform Args', 'User Defined', 'Build Events'];

function PathField({ label, value, mt, fixed }) {
  return (
    <>
      <PathRow $mt={mt}><PathLabel>{label}</PathLabel><PathInput>{value}</PathInput></PathRow>
      {fixed && <FixedRow><CheckBox /><FixedLabel>Fixed path</FixedLabel><NotSpecified>(Not specified)</NotSpecified></FixedRow>}
    </>
  );
}

const TabSlant = ({ w, active }) => (
  <Svg w={w} h={20} vb={`0 0 ${w} 20`}>
    <path d={active ? `M0 20 ${w - 5} 2.500Q${w - 3} .5 ${w} .5V20z` : `M0 9 ${w - 5} 2.500Q${w - 3} .5 ${w} .5V20H0z`} fill={active ? '#fff' : '#e3e3e3'} />
    <path d={active ? `M0 19.500 ${w - 5} 2.500Q${w - 3} .5 ${w} .5` : `M0 10 ${w - 5} 2.500Q${w - 3} .5 ${w} .5`} stroke="#696969" />
  </Svg>
);

function BuilderWindow() {
  return (
    <Win>
      <WinTitle>
        <CastleIcon s={16} />dsadsda - Sandcastle Help File Builder
        <WinButtons>
          <Svg w={10} h={10} vb="0 0 10 10"><path d="M0 5.500h10" stroke="#000" /></Svg>
          <Svg w={10} h={10} vb="0 0 10 10"><rect x=".5" y=".5" width="9" height="9" stroke="#000" /></Svg>
          <Cross s={11} sw={1} />
        </WinButtons>
      </WinTitle>
      <MenuBar>
        <MenuItem $w={35}>File</MenuItem>
        <MenuItem $w={91} $ls={-0.500}>Documentation</MenuItem>
        <MenuItem $w={58}>Window</MenuItem>
        <MenuItem $w={40}>Help</MenuItem>
      </MenuBar>
      <IconBar>
        <Tool $ml={3}><NewDoc /></Tool>
        <Tool $ml={7}><OpenFolder /></Tool>
        <Sep $ml={7} />
        <Tool $ml={5}><SaveOne /></Tool>
        <Tool $ml={7}><SaveAll /></Tool>
        <Sep $ml={5} />
        <Tool $ml={4}><ExplorerTool /></Tool>
        <Tool $ml={8}><PropsTool /></Tool>
        <Tool $ml={7}><ScriptTool /></Tool>
        <Tool $ml={7}><PreviewTool /></Tool>
        <Sep $ml={7} />
        <Combo $ml={2} $w={119}>Debug<ComboArrow><Down /></ComboArrow></Combo>
        <Combo $ml={3} $w={121}>AnyCPU<ComboArrow><Down /></ComboArrow></Combo>
        <Sep $ml={4} />
        <Tool $ml={4}><BuildTool /></Tool>
        <Tool $ml={7}><BuildTool off /></Tool>
        <Tool $ml={7}><ViewTool /></Tool>
        <Tool $ml={7}><FindTool /></Tool>
        <Tool $ml={5}><Down /></Tool>
        <Sep $ml={-5} />
        <Faq>FAQ</Faq>
        <Tool $ml={4}><HelpIcon s={18} /></Tool>
      </IconBar>
      <WinBody>
        <Dock>
          <DockTabs>
            <DockTab $active>
              <TabSlant w={17} active />
              <DockTabLabel $active $w={111}>Project Properties</DockTabLabel>
            </DockTab>
            <DockTab>
              <TabSlant w={9} />
              <DockTabLabel $w={80}>Build Output</DockTabLabel>
            </DockTab>
            <DockButtons><Down s={8} /><Cross /></DockButtons>
          </DockTabs>
          <DockContent>
            <PageList>
              {PAGES.map((p) => <PageRow key={p} $selected={p === 'Paths'}>{p}</PageRow>)}
            </PageList>
            <Form>
              <GroupTitle $mt={12}>Tool Paths</GroupTitle>
              <Hint>If not specified, the help file builder will search for the tools in their well-known locations.</Hint>
              <PathField label="HTML Help 1 compiler path" fixed />
              <PathField label="MS Help 2 compiler path" mt={16} fixed />
              <PathField label="Project-specific components path" mt={32} fixed />
              <GroupTitle $mt={19}>Output Paths</GroupTitle>
              <PathField label="Help content output path" value="Help\" mt={7} />
              <PathField label="Working files path" mt={14} fixed />
              <ScrollBar>
                <Svg w={7} h={8} vb="0 0 7 8"><path d="M5.500.500 2 4l3.500 3.500" stroke="#505050" strokeWidth="2" /></Svg>
                <Thumb />
                <Svg w={7} h={8} vb="0 0 7 8"><path d="M1.500.500 5 4 1.500 7.500" stroke="#505050" strokeWidth="2" /></Svg>
              </ScrollBar>
            </Form>
          </DockContent>
        </Dock>
        <Side>
          <SideHeader>
            Project Explorer
            <SideButtons>
              <Svg w={8} h={10} vb="0 0 8 10"><path d="M2 .5h4v5H2zM5.200.500v5M0 6h8M4 6v4" stroke="#000" strokeWidth="1.200" /></Svg>
              <Cross />
            </SideButtons>
          </SideHeader>
          <Tree>
            <TreeRow><CastleIcon s={15} /><TreeLabel $root>dsadsda</TreeLabel></TreeRow>
            <TreeRow $child><Branch><Svg w={11} h={16} vb="0 0 11 16"><path d="M.500 0v16M0 8.500h11" stroke="#999" strokeDasharray="1 1" /></Svg></Branch><FolderDoc /><TreeLabel $ls={0.010}>Documentation Sources</TreeLabel></TreeRow>
            <TreeRow $child><Branch><Svg w={11} h={16} vb="0 0 11 16"><path d="M.500 0v8M0 8.500h11" stroke="#999" strokeDasharray="1 1" /></Svg></Branch><FolderDoc refs /><TreeLabel $ls={0.100}>References</TreeLabel></TreeRow>
          </Tree>
          <PropBar>
            <Category><Svg><rect x=".5" y=".5" width="6" height="6" rx="1" fill="#fff" stroke="#7a8fb5" /><rect x=".5" y="9.500" width="6" height="6" rx="1" fill="#fff" stroke="#7a8fb5" /><path d="M2 3.500h3M3.500 2v3M2 12.500h3M3.500 11v3" stroke="#000" /><path d="M8 2.500h4M8 4.500h3M12 4.500h4M8 6.500h3M12 6.500h4M8 8.500h3M12 8.500h4M8 13.500h4M8 15.500h3M12 15.500h4" stroke="#76869f" /></Svg></Category>
            <SortIcon><SortLetters>A<em>Z</em></SortLetters><Svg w={5} h={15} vb="0 0 5 15"><path d="M2.500 0v14M.5 11l2 3 2-3z" stroke="#000" fill="#000" /></Svg></SortIcon>
            <PropSep />
            <Svg w={16} h={15} vb="0 0 16 15"><rect x=".5" y=".5" width="15" height="14" fill="#ddd" stroke="#a8a8a8" /><path d="M0 1.500h16" stroke="#a8a8a8" strokeWidth="2" /><path d="M2.500 11.500v-6h4l1-1h6v7z" fill="#eee" stroke="#b0b0b0" /><path d="M4 8.500h1.500M7 8.500h5" stroke="#aaa" /></Svg>
          </PropBar>
          <PropGrid />
          <PropHelp />
        </Side>
      </WinBody>
      <StatusBar>
        Ready
        <StatusEnd>
          <Progress />
          <Svg w={13} h={17} vb="0 0 13 17"><path d="M10 7h2v2h-2zM10 11h2v2h-2zM6 11h2v2H6zM10 15h2v2h-2zM6 15h2v2H6zM2 15h2v2H2z" fill="#a0a0a0" /></Svg>
        </StatusEnd>
      </StatusBar>
    </Win>
  );
}

/* ---------- taskbar ---------- */

const Taskbar = styled.div`
  height: 40px;
  flex: none;
  margin-top: auto;
  display: flex;
  background: #1e1d1d;
  color: #f2f2f2;
`;
const TaskItem = styled.div`
  width: ${(p) => p.$w || 49}px;
  display: flex;
  align-items: center;
  justify-content: center;
  background: ${(p) => (p.$active ? '#3d3c3c' : 'transparent')};
  ${(p) => p.$running && css`
    background-image: linear-gradient(#b8adae, #b8adae);
    background-repeat: no-repeat;
    background-position: 50% 100%;
    background-size: ${p.$active ? '100%' : '40px'} 2px;
  `}
`;
const Tray = styled.div`
  display: flex;
  align-items: center;
  margin-left: auto;
  margin-right: 4px;
`;
const TraySlot = styled.span`
  width: ${(p) => p.$w}px;
  display: flex;
`;
const Lang = styled.span`
  width: 36px;
  font-size: 11.700px;
  letter-spacing: -0.200px;
`;
const Clock = styled.div`
  width: 59px;
  margin-right: 5px;
  padding-bottom: 1px;
  text-align: center;
  font-size: 11.700px;
  line-height: 17px;
  letter-spacing: -0.260px;
`;
const ShowDesktop = styled.span`
  width: 1px;
  height: 40px;
  background: #6c6c6c;
`;
const GoText = styled.text`
  font: 700 9px "Liberation Sans", sans-serif;
  fill: #2b1a08;
`;
const LogoText = styled.text`
  font: 700 ${(p) => p.$s}px "Open Sans", sans-serif;
  fill: #fff;
  text-anchor: middle;
`;

const ICON = '0 0 24 24';
const TASKS = [
  [48, <FaWindows size={17} color="#fff" />],
  [48, <Svg w={18} h={18} vb="0 0 18 18"><circle cx="11.500" cy="6" r="4.800" stroke="#fff" strokeWidth="1.300" /><path d="M8 9.800 1 17" stroke="#fff" strokeWidth="1.400" /></Svg>],
  [48, <Svg w={20} h={14} vb="0 0 20 14"><path d="M4.500.500h11v13h-11zM3 2.500H.500v9H3M17 2.500h2.500v9H17" stroke="#fff" strokeWidth="1.200" /></Svg>],
  [50, <Svg w={22} h={20} vb="0 0 22 20"><path d="M0 1h9l1.500 2H22v15H0z" fill="#f6d36b" /><path d="M0 4h22v13H0z" fill="#fbe192" /><path d="M3.500 20v-7q0-3 3-3h9q3 0 3 3v7h-4.300v-5H7.800v5z" fill="#39b0ea" /></Svg>, 1],
  [49, <Svg w={24} vb={ICON}><circle cx="12" cy="12" r="12" fill="#1ed760" /><path d="M5 8.200c5-1.500 10.500-1 14.500 1.300M5.800 12.200c4.200-1.300 8.800-.8 12 1.200M6.600 16c3.500-1 7-.6 9.800 1" stroke="#1e1d1d" strokeWidth="2" strokeLinecap="round" /></Svg>],
  [49, <Svg w={23} vb={ICON}><circle cx="12.500" cy="11" r="10" fill="#2f86d0" /><path d="M9 3.500c4-1 8 1 9 4-3-1-4 0-5 2z" fill="#8fd0ef" /><path d="M1.500 5c0 2 0 3 .5 3.500C1 14 2 23 12 23.500c8 0 13-8 11-15-1-4-3-5-4-6 2 5 1 9-1 11-3 4-8 3-10 0 2 1 4 0 5-1-3-1-3-3-5-4C6 7 5 7 3.500 8z" fill="#e8591c" /><path d="M19.500 3c3 5 4 11-2 16 6-2 8-9 4-14z" fill="#fbc02d" /></Svg>],
  [49, <Svg w={22} vb={ICON}><circle cx="12" cy="12" r="12" fill="#fbc116" /><path d="M12 12 1.600 6A12 12 0 0 1 22.400 6z" fill="#e33b2e" /><path d="M12 12 1.600 6A12 12 0 0 0 11 24l6-9z" fill="#1fa055" /><path d="M12 6.500h10.700" stroke="#e33b2e" strokeWidth="1" /><circle cx="12" cy="12" r="5.600" fill="#fff" /><circle cx="12" cy="12" r="4.400" fill="#4688f1" /></Svg>, 1],
  [49, <Svg w={24} vb={ICON}><circle cx="12" cy="12" r="12" fill="#71b544" /><path d="M6.500 5.500 8.500 14.500c1 3 5 2.500 5-.5L12.500 5.500M13.500 14c1 2.500 4 2.300 6 1L16.800 5M8.500 14.500l1 8" stroke="#fff" strokeWidth="3" /></Svg>],
  [49, <Svg w={23} vb={ICON}><circle cx="8" cy="8" r="7.500" fill="#00aff0" /><circle cx="16" cy="16" r="7.500" fill="#00aff0" /><circle cx="12" cy="12" r="10" fill="#00aff0" /><LogoText x="12" y="18" $s={17}>S</LogoText></Svg>],
  [49, <Svg w={22} vb={ICON}><circle cx="12" cy="12" r="12" fill="#16447c" /><path d="M1 15a12 12 0 0 0 22 0l-4-8-10 8z" fill="#0f2a55" /><FaSteamSymbol x="1" y="1" size={22} color="#e9eef5" /></Svg>],
  [49, <Svg w={24} vb={ICON}><rect width="24" height="24" fill="#e0a04d" /><path d="M0 0h24v8L10 12 0 8z" fill="#efbf74" /><path d="M4.500 4h2v2.500l4-.5v1.300L7 8.500v4l1.500 10H7l-2-7-2.500 7H1L3 12z" fill="#1d140b" /><GoText x="9" y="17" textLength="14">GO</GoText></Svg>, 1],
  [49, <Svg w={24} vb={ICON}><path d="M17 0l6.500 3v18L17 24l-8.500-7.500L3.500 20.500 0 19V5l3.500-1.500 5 4z" fill="#fff" /><path d="M17 2l5 2.300v15.400L17 22l-8.500-8L4 18l-2-1V7l2-1 4.500 4zM17.500 8 12 12l5.500 4.200zM4 9.500v5L6.500 12z" fill="#68217a" /></Svg>, 1],
  [48, <CastleIcon s={24} />, 1, 1],
];

function TaskbarRow() {
  return (
    <Taskbar>
      {TASKS.map(([w, icon, running, active], i) => (
        <TaskItem key={i} $w={w} $running={running} $active={active}>{icon}</TaskItem>
      ))}
      <Tray>
        <TraySlot $w={22}><Svg w={12} h={7} vb="0 0 12 7"><path d="M.5 6.500 6 1l5.500 5.500" stroke="#fff" strokeWidth="1.400" /></Svg></TraySlot>
        <TraySlot $w={24}><Svg w={16} h={13} vb="0 0 16 13"><path d="M4.500 1.500h11v8h-11M8 9.500v3M5 12.500h7M.500.500h4v4h-4zM2.500 4.500v5h3" stroke="#fff" strokeWidth="1.100" /></Svg></TraySlot>
        <TraySlot $w={24}><Svg w={17} h={14} vb="0 0 17 14"><path d="M.500 4.500h2.500L6.500 1v12L3 9.500H.500z" stroke="#fff" /><path d="M8.500 5c1 1.200 1 2.800 0 4M11 3c2 2.400 2 5.600 0 8M13.500 1c3 3.600 3 8.400 0 12" stroke="#fff" strokeWidth="1.100" /></Svg></TraySlot>
        <TraySlot $w={26}><Svg w={16} h={16} vb="0 0 16 16"><path d="M.500.500h15v11h-5L8 14.500l-2.500-3h-5z" stroke="#fff" strokeWidth="1.200" /><path d="M3.500 3.500h9M3.500 6h9M3.500 8.500h6" stroke="#fff" /></Svg></TraySlot>
        <Lang>ENG</Lang>
        <Clock>11:30 PM<br />8/19/2015</Clock>
        <ShowDesktop />
      </Tray>
    </Taskbar>
  );
}

export default function App() {
  return (
    <Screen>
      <Global />
      <Browser />
      <DocPage />
      <TaskbarRow />
      <BuilderWindow />
    </Screen>
  );
}
